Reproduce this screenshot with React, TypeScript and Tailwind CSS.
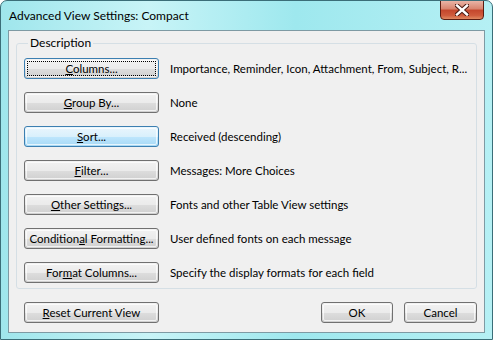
import type { ReactNode } from "react";

const font = { fontFamily: 'Lato, "Noto Sans", "Liberation Sans", sans-serif' };

type BtnProps = {
  children: ReactNode;
  className?: string;
  variant?: "normal" | "hot" | "focus";
};

const Btn = ({ children, className = "", variant = "normal" }: BtnProps) => {
  const skin =
    variant === "hot"
      ? "border-[#3c7fb1] bg-[linear-gradient(#eaf6fd_0%,#d9f0fc_50%,#bee6fd_51%,#a7d9f5_100%)]"
      : variant === "focus"
        ? "border-[#3c7fb1] bg-[linear-gradient(#f2f2f2_0%,#ebebeb_50%,#dddddd_51%,#cfcfcf_100%)]"
        : "border-[#707070] bg-[linear-gradient(#f2f2f2_0%,#ebebeb_50%,#dddddd_51%,#cfcfcf_100%)]";
  return (
    <div
      className={`relative flex h-[21px] shrink-0 items-center justify-center whitespace-nowrap rounded-[3px] border text-[11.5px] text-black ${skin} ${className}`}
    >
      <div className="pointer-events-none absolute inset-[1px] rounded-[2px] border border-white/70" />
      {variant === "focus" ? (
        <div className="pointer-events-none absolute inset-[2px] border border-dotted border-black" />
      ) : null}
      <span className="relative leading-none">{children}</span>
    </div>
  );
};

const rows: { label: ReactNode; text: string; variant?: "hot" | "focus" }[] = [
  {
    label: (
      <>
        <u>C</u>olumns...
      </>
    ),
    text: "Importance, Reminder, Icon, Attachment, From, Subject, R...",
    variant: "focus",
  },
  {
    label: (
      <>
        <u>G</u>roup By...
      </>
    ),
    text: "None",
  },
  {
    label: (
      <>
        <u>S</u>ort...
      </>
    ),
    text: "Received (descending)",
    variant: "hot",
  },
  {
    label: (
      <>
        <u>F</u>ilter...
      </>
    ),
    text: "Messages: More Choices",
  },
  {
    label: (
      <>
        <u>O</u>ther Settings...
      </>
    ),
    text: "Fonts and other Table View settings",
  },
  {
    label: (
      <>
        Condition<u>a</u>l Formatting...
      </>
    ),
    text: "User defined fonts on each message",
  },
  {
    label: (
      <>
        For<u>m</u>at Columns...
      </>
    ),
    text: "Specify the display formats for each field",
  },
];

export default function App() {
  return (
    <div
      className="relative flex h-[340px] w-[493px] flex-col overflow-hidden rounded-t-[7px] border border-[#3b6e78] bg-[linear-gradient(90deg,#9fe6ec_0%,#c8f4f7_30%,#9ee8ee_60%,#b5f0f4_100%)]"
      style={font}
    >
      {/* title bar */}
      <div className="flex h-[29px] items-center pl-[8px]">
        <span className="text-[12px] text-black">Advanced View Settings: Compact</span>
      </div>
      <div className="absolute right-[8px] top-[-1px] flex h-[20px] w-[44px] items-center justify-center rounded-b-[4px] border border-[#5a1d12] bg-[linear-gradient(#e9b4a6_0%,#d8836d_45%,#c4462c_50%,#cf5b3c_80%,#e08a62_100%)]">
        <svg width="14" height="12" viewBox="0 0 14 12">
          <path d="M2 1.5 L12 10.5 M12 1.5 L2 10.5" stroke="#4a1a12" strokeWidth="4.4" strokeLinecap="square" />
          <path d="M2 1.5 L12 10.5 M12 1.5 L2 10.5" stroke="#ffffff" strokeWidth="2.4" strokeLinecap="square" />
        </svg>
      </div>

      {/* client area */}
      <div className="mx-[7px] flex h-[303px] flex-col border border-[#7e9aa3] bg-[#f0f0f0]">
        <fieldset className="mx-[7px] mt-[4px] h-[254px] rounded-[3px] border border-[#d5dfe5] px-[7px]">
          <legend className="ml-[4px] px-[2px] text-[12px] leading-[16px] text-black">Description</legend>
          <div className="mt-[7px] flex flex-col gap-[13px]">
            {rows.map((r, i) => (
              <div key={i} className="flex h-[21px] items-center">
                <Btn className="w-[135px]" variant={r.variant}>
                  {r.label}
                </Btn>
                <span className="ml-[11px] whitespace-nowrap text-[11.5px] text-black">{r.text}</span>
              </div>
            ))}
          </div>
        </fieldset>
        <div className="mt-[13px] flex items-center pl-[15px] pr-[7px]">
          <Btn className="w-[135px]">
            <u>R</u>eset Current View
          </Btn>
          <div className="flex-1" />
          <Btn className="w-[72px]">OK</Btn>
          <Btn className="ml-[11px] w-[73px]">Cancel</Btn>
        </div>
      </div>
    </div>
  );
}
